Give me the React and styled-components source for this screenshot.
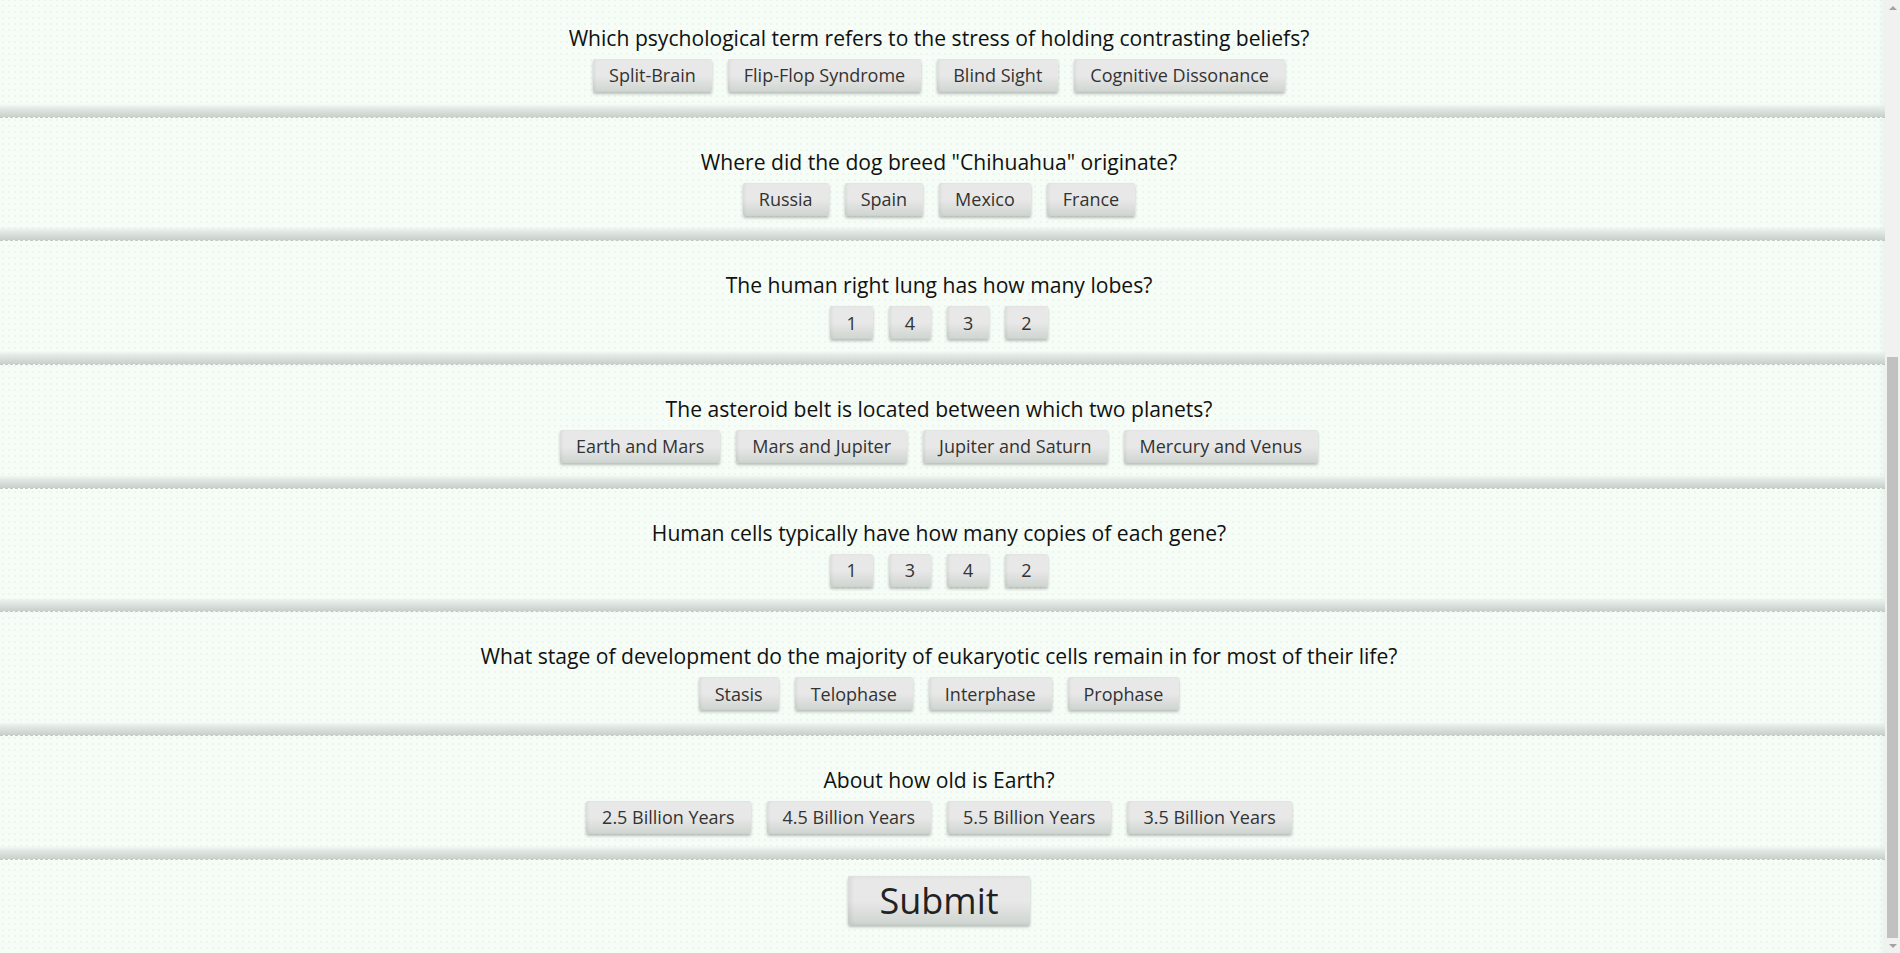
import React, {useLayoutEffect, useRef, useState} from "react";
import styled, {createGlobalStyle} from "styled-components";

const GlobalStyle = createGlobalStyle`
    html, body {
        margin: 0;
        padding: 0;
        height: 100%;
        overflow: hidden;
    }
    body {
        background-color: #f5fdf6;
        font-family: "Open Sans", "Liberation Sans", sans-serif;
        color: #111;
    }
`;

const Frame = styled.div`
    display: flex;
    height: 100vh;
`;

const Scroller = styled.div`
    flex: 1;
    min-width: 0;
    overflow-y: scroll;
    scrollbar-width: none;
    background-image: radial-gradient(#edf5ee 1px, transparent 1px);
    background-size: 6px 6px;
    background-attachment: local;
    box-shadow: inset -6px 0 6px -4px rgba(0, 0, 0, 0.06);

    &::-webkit-scrollbar {
        display: none;
    }
`;

const Track = styled.div`
    width: 15px;
    flex-shrink: 0;
    display: flex;
    flex-direction: column;
    background: #f1f1f1;
`;

const Arrow = styled.div`
    height: 15px;
    flex-shrink: 0;
    display: flex;
    align-items: center;
    justify-content: center;

    &::before {
        content: "";
        border-left: 4px solid transparent;
        border-right: 4px solid transparent;
        ${(p) => (p.$down
            ? "border-top: 4px solid #a3a3a3;"
            : "border-bottom: 4px solid #a3a3a3;")}
    }
`;

const Rail = styled.div`
    flex: 1;
    display: flex;
    flex-direction: column;
    padding: 0 2px;
`;

const Thumb = styled.div`
    background: #c1c1c1;
`;

const Page = styled.main`
    display: flex;
    flex-direction: column;
`;

const Header = styled.header`
    height: 184px;
    display: flex;
    align-items: center;
    justify-content: center;
    padding-right: 7px;
`;

const Title = styled.h1`
    margin: 0;
    font-size: 40px;
    font-weight: 600;
    color: #222;
`;

const Section = styled.section`
    padding: 32px 7px 24.67px 0;
    text-align: center;
    border-bottom: 1px dashed #c3cac4;
    background: linear-gradient(
        to bottom,
        transparent calc(100% - 13px),
        #e4eae5 calc(100% - 9px),
        #c9d0ca 100%
    );
`;

const Question = styled.h2`
    margin: 0 0 9px;
    font-size: 21.1px;
    line-height: 24px;
    font-weight: 400;
    color: #111;
`;

const Options = styled.div`
    display: flex;
    justify-content: center;
    gap: 16px;
`;

const Option = styled.button`
    height: 33px;
    padding: 0 16px;
    border: none;
    border-radius: 2px;
    font-family: inherit;
    font-size: 18px;
    color: #333;
    cursor: pointer;
    background: linear-gradient(to bottom, #e8e8e8 50%, #cfd5d0 100%);
    box-shadow: 0 2px 3px rgba(0, 0, 0, 0.25), inset 2px 0 3px rgba(0, 0, 0, 0.05);
`;

const SubmitRow = styled.div`
    display: flex;
    justify-content: center;
    padding: 16px 7px 28px 0;
`;

const SubmitButton = styled.button`
    height: 49px;
    padding: 0 31px;
    border: none;
    border-radius: 2px;
    font-family: inherit;
    font-size: 36px;
    color: #222;
    cursor: pointer;
    background: linear-gradient(to bottom, #e8e8e8 50%, #cfd5d0 100%);
    box-shadow: 0 2px 3px rgba(0, 0, 0, 0.25), inset 3px 0 4px rgba(0, 0, 0, 0.07);
`;

const questions = [
    {q: "Which planet is known as the Red Planet?", a: ["Venus", "Mars", "Jupiter", "Saturn"]},
    {q: "What is the chemical symbol for gold?", a: ["Ag", "Au", "Gd", "Go"]},
    {q: "How many bones are in the adult human body?", a: ["186", "206", "226", "246"]},
    {q: "Which psychological term refers to the stress of holding contrasting beliefs?", a: ["Split-Brain", "Flip-Flop Syndrome", "Blind Sight", "Cognitive Dissonance"]},
    {q: "Where did the dog breed \"Chihuahua\" originate?", a: ["Russia", "Spain", "Mexico", "France"]},
    {q: "The human right lung has how many lobes?", a: ["1", "4", "3", "2"]},
    {q: "The asteroid belt is located between which two planets?", a: ["Earth and Mars", "Mars and Jupiter", "Jupiter and Saturn", "Mercury and Venus"]},
    {q: "Human cells typically have how many copies of each gene?", a: ["1", "3", "4", "2"]},
    {q: "What stage of development do the majority of eukaryotic cells remain in for most of their life?", a: ["Stasis", "Telophase", "Interphase", "Prophase"]},
    {q: "About how old is Earth?", a: ["2.5 Billion Years", "4.5 Billion Years", "5.5 Billion Years", "3.5 Billion Years"]},
];

const App = () => {
    const scroller = useRef(null);
    const [thumb, setThumb] = useState({top: 0, size: 1});

    const measure = () => {
        const el = scroller.current;
        if (!el) return;
        setThumb({
            top: el.scrollTop / el.scrollHeight,
            size: el.clientHeight / el.scrollHeight,
        });
    };

    useLayoutEffect(() => {
        const el = scroller.current;
        if (el) el.scrollTop = el.scrollHeight;
        measure();
    }, []);

    return (
        <>
            <GlobalStyle />
            <Frame>
                <Scroller ref={scroller} onScroll={measure}>
                    <Page>
                        <Header>
                            <Title>{"Quizzical"}</Title>
                        </Header>
                        {questions.map((item) => (
                            <Section key={item.q}>
                                <Question>{item.q}</Question>
                                <Options>
                                    {item.a.map((answer) => (
                                        <Option key={answer}>{answer}</Option>
                                    ))}
                                </Options>
                            </Section>
                        ))}
                        <SubmitRow>
                            <SubmitButton>{"Submit"}</SubmitButton>
                        </SubmitRow>
                    </Page>
                </Scroller>
                <Track>
                    <Arrow />
                    <Rail>
                        <div style={{flex: thumb.top}} />
                        <Thumb style={{flex: thumb.size}} />
                        <div style={{flex: Math.max(0, 1 - thumb.top - thumb.size)}} />
                    </Rail>
                    <Arrow $down />
                </Track>
            </Frame>
        </>
    );
};

export default App;
